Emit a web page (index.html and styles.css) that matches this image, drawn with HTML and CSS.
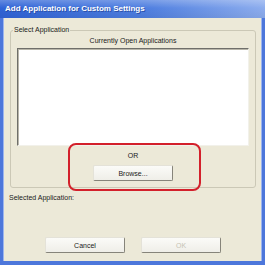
FILE: index.html
```html
<!DOCTYPE html>
<html lang="en">
<head>
<meta charset="UTF-8">
<title>Add Application for Custom Settings</title>
<link rel="stylesheet" href="styles.css">
</head>
<body>
    <div class="window">
        <div class="titlebar">Add Application for Custom Settings</div>
        <div class="dialog">
            <fieldset class="group">
                <legend>Select Application</legend>
                <div class="caption">Currently Open Applications</div>
                <div class="listbox"></div>
                <div class="or-block">
                    <div class="or">OR</div>
                    <button class="btn browse">Browse...</button>
                    <div class="highlight"></div>
                </div>
            </fieldset>
            <div class="selected">Selected Application:</div>
            <div class="actions">
                <button class="btn">Cancel</button>
                <button class="btn" disabled>OK</button>
            </div>
        </div>
    </div>
</body>
</html>
```

FILE: styles.css
```css
* {
    margin: 0;
    padding: 0;
    box-sizing: border-box;
}
body {
    font-family: 'Liberation Sans', Arial, sans-serif;
    font-size: 7px;
    color: #1a1a1a;
    background-color: #ece9d8;
}
.window {
    width: 265px;
    height: 265px;
    display: flex;
    flex-direction: column;
}
.titlebar {
    height: 18px;
    padding: 0 5px;
    line-height: 18px;
    font-size: 8px;
    font-weight: bold;
    color: #fff;
    text-shadow: 1px 1px 0 #2a4fa8;
    background: linear-gradient(rgba(255, 255, 255, 0.25), rgba(255, 255, 255, 0) 45%, rgba(0, 0, 0, 0.05)),
                linear-gradient(to right, #2f63d6, #4f7fe0 55%, #8dadee);
}
.dialog {
    flex: 1;
    padding: 7px 6px 0 7px;
    background-color: #ece9d8;
    border-left: 3px solid #4d77db;
    border-right: 3px solid #4d77db;
    border-bottom: 4px solid #4d77db;
    box-shadow: inset 1px 0 0 #9db5ee, inset -1px 0 0 #9db5ee;
}
.group {
    border: 1px solid #cbc8b6;
    border-radius: 3px;
    padding: 0 6px 6px;
}
.group legend {
    margin-left: -4px;
    padding: 0 1px;
    line-height: 10px;
}
.caption {
    margin-top: 1px;
    line-height: 10px;
    text-align: center;
}
.listbox {
    margin-top: 2px;
    height: 98px;
    background-color: #fff;
    border: 1px solid;
    border-color: #6f6f6a #f2f1ea #f2f1ea #6f6f6a;
    box-shadow: inset 1px 1px 0 #b8b6aa;
}
.or-block {
    position: relative;
    padding-top: 5px;
    display: flex;
    flex-direction: column;
    align-items: center;
}
.or {
    line-height: 10px;
}
.btn {
    width: 80px;
    height: 16px;
    font-family: inherit;
    font-size: 7px;
    color: #1a1a1a;
    background: linear-gradient(#fbfbf8, #efeee8);
    border: 1px solid;
    border-color: #e4e2d8 #86847a #86847a #e4e2d8;
    border-radius: 2px;
}
.btn:disabled {
    color: #c6c3b4;
}
.browse {
    margin-top: 4px;
}
.highlight {
    position: absolute;
    left: 51px;
    top: -3px;
    width: 133px;
    height: 48px;
    border: 2px solid #d3202b;
    border-radius: 8px;
}
.selected {
    margin-top: 5px;
    margin-left: -1px;
    line-height: 10px;
}
.actions {
    margin-top: 34px;
    display: flex;
    justify-content: center;
    gap: 16px;
}
```
